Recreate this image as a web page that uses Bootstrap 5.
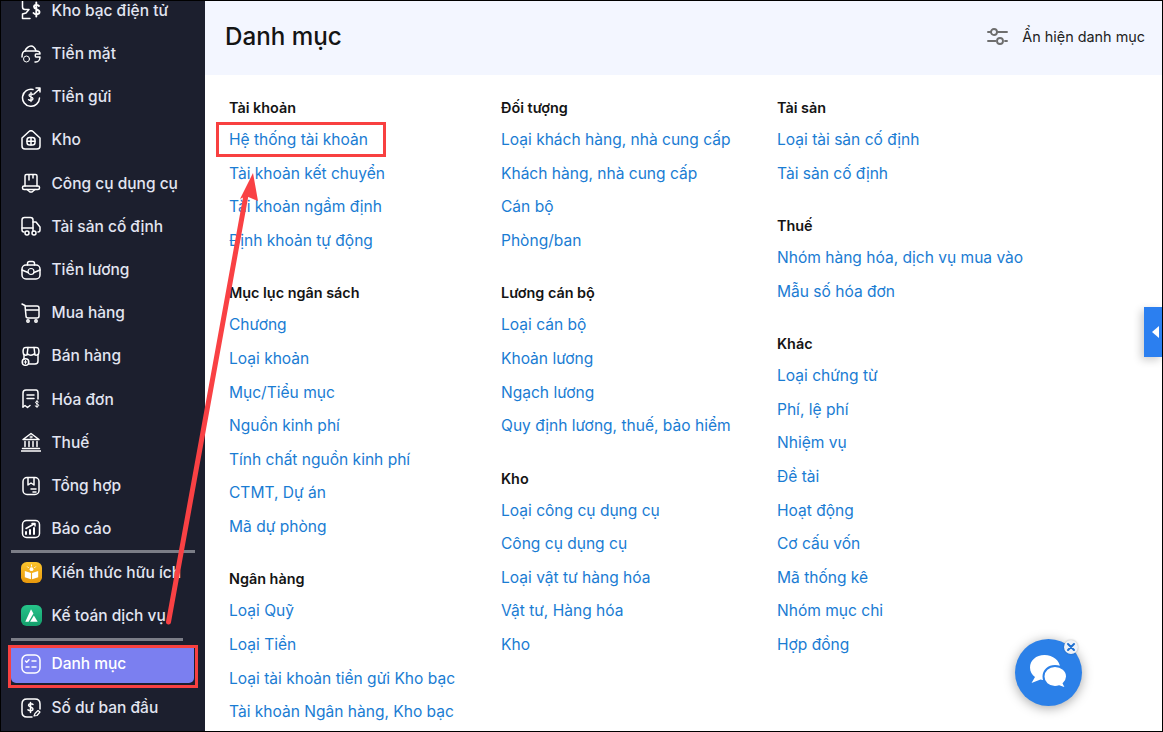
<!DOCTYPE html>
<html lang="vi">
<head>
<meta charset="utf-8">
<title>Danh mục</title>
<link href="https://cdn.jsdelivr.net/npm/bootstrap@5.3.0/dist/css/bootstrap.min.css" rel="stylesheet">
<style>
html,body{height:732px;overflow:hidden;margin:0}
body{font-family:Inter,"Liberation Sans",sans-serif;background:#fff;color:#141414}
.app-shell{height:732px;width:1163px;position:relative;overflow:hidden}
.side-pane{width:205px;background:#1c1f2e;flex:none;overflow:hidden;padding-top:0}
.side-list{margin-top:-11.1px}
.side-row{height:43.2px;padding-left:21px;gap:10.5px;color:#e2e5f1;font-size:15.5px;font-weight:500;white-space:nowrap;text-decoration:none;overflow:hidden}
.side-row svg{width:20px;height:20px;flex:none;fill:none;stroke:#fff;stroke-width:1.5;stroke-linecap:round;stroke-linejoin:round}
.side-row svg.app-badge{width:21px;height:21px;stroke:none;margin-right:-1px}
.side-rule{height:3px;background:#7b7d87;margin:-.5px 10px -2px 11px}
.side-rule.short-rule{margin:.3px 22px 7.6px 11px}
.side-active{background:#7b7ff0;color:#fff;height:35px;margin:0 11px 3.2px 11px;padding-left:10px;padding-bottom:3px;border-radius:0 0 5px 5px}
.main-pane{min-width:0}
.page-head{height:75px;background:#f3f6ff;padding:0 18px 0 20px}
.page-title{font-size:24.2px;font-weight:500;margin:0 0 1px;color:#141414;line-height:1}
.toggle-cats{gap:14px;font-size:14.4px;color:#222;margin-bottom:2px}
.toggle-cats svg{width:21px;height:20px;fill:none;stroke:#6e6e6e;stroke-width:1.9;stroke-linecap:round}
.cat-area{padding:16.3px 0 0 24px}
.cat-col-a{width:272px;flex:none}
.cat-col-b{width:276px;flex:none}
.cat-col-c{flex:1}
.cat-group{margin-bottom:18.8px}
.cat-head{font-size:14.4px;font-weight:600;color:#141414;height:32px;line-height:33.6px;margin:0}
.cat-link{display:block;font-size:15.55px;color:#1a7cd3;height:33.6px;line-height:33.6px;text-decoration:none;white-space:nowrap}
.mark-box{position:absolute;border:3px solid #f84040;pointer-events:none}
.mark-side{left:8px;top:645px;width:190px;height:43px}
.mark-link{left:216px;top:122px;width:170px;height:35px}
.arrow-layer{position:absolute;left:0;top:0;width:1163px;height:732px;pointer-events:none}
.side-tab{position:absolute;left:1144px;top:307px;width:19px;height:50px;background:#2b7ff0;box-shadow:-3px 3px 8px rgba(0,0,0,.2)}
.side-tab i{display:block;width:0;height:0;border-style:solid;border-width:6px 7px 6px 0;border-color:transparent #fff transparent transparent;margin:19px 0 0 8px}
.chat-bubble{position:absolute;left:1015px;top:639px;width:67px;height:67px;border-radius:50%;background:#2b80e8;box-shadow:0 2px 12px rgba(0,0,0,.35)}
.chat-bubble svg{width:67px;height:67px;display:block}
.chat-close{position:absolute;left:1064px;top:640px;width:14px;height:14px;border-radius:50%;background:#eef2f8;box-shadow:0 0 2px rgba(0,0,0,.3)}
.chat-close svg{display:block;width:14px;height:14px}
.frame-edge{position:absolute;inset:0;border:1px solid #000;pointer-events:none}
</style>
</head>
<body>
<div class="app-shell d-flex">
  <aside class="side-pane">
    <div class="side-list">
      <a class="side-row d-flex align-items-center" href="#"><svg viewBox="0 0 20 20"><path d="M1.500 0v6c0 1.500 1 2.500 2.500 2.500h4L5 12l-3.500 1v4.500H9"/><path d="M18 5c-.8-1.500-5-1.800-5 .8 0 3 5.500 2 5.500 5.200 0 2.800-4.500 2.800-6 1M15.300 1.500v14" stroke-width="1.900"/></svg>Kho bạc điện tử</a>
      <a class="side-row d-flex align-items-center" href="#"><svg viewBox="0 0 20 20"><path d="M1 13c0-4 1.500-6 3.500-6h11c2 0 3.500 1 3.500 3h-4c-1 0-1 3 0 3h4c0 3-2 5-4 5H14"/><path d="M4 7c1-3 4-5 6-5s4 2 5 5"/><circle cx="5.500" cy="15" r="3" stroke-width="1"/></svg>Tiền mặt</a>
      <a class="side-row d-flex align-items-center" href="#"><svg viewBox="0 0 20 20"><path d="M12 2.500A8.500 8.500 0 1 0 18.500 11"/><path d="M13 7l6-5.500M15 1h4v4"/><path d="M12 7.500c-1-1-4-1-4 .8s4 1.500 4 3.500-3 1.800-4.500.8M10 5.500v9" stroke-width="1.300"/></svg>Tiền gửi</a>
      <a class="side-row d-flex align-items-center" href="#"><svg viewBox="0 0 20 20"><path d="M1 8l7-6.500c1-.8 3-.8 4 0L19 8v8c0 2-1 3-3 3H4c-2 0-3-1-3-3z"/><rect x="6" y="7.500" width="8" height="7.500" rx="2.500"/><path d="M10 7.500V15M6 11.200h8"/></svg>Kho</a>
      <a class="side-row d-flex align-items-center" href="#"><svg viewBox="0 0 20 20"><path d="M4 13V3c0-1 .5-1.500 1.500-1.500h9c1 0 1.500.5 1.500 1.500v10"/><path d="M8 2v5M12 2v3"/><rect x="1.500" y="13" width="17" height="3.500" rx="1.500"/><path d="M6 16.500l3 2.500h2l3-2.500"/></svg>Công cụ dụng cụ</a>
      <a class="side-row d-flex align-items-center" href="#"><svg viewBox="0 0 20 20"><path d="M3 16c-1.500 0-2-1-2-2V4c0-1.500 1-2.500 2.500-2.500h6c1.500 0 2.500 1 2.500 2.500v11"/><path d="M1 12h11M12 6h3l4 5v3c0 1-1 2-2 2"/><circle cx="6" cy="17" r="2"/><circle cx="13" cy="17" r="2"/></svg>Tài sản cố định</a>
      <a class="side-row d-flex align-items-center" href="#"><svg viewBox="0 0 20 20"><rect x="1" y="5" width="18" height="14" rx="4"/><path d="M6.500 5V3.500c0-1 1-2 2-2h3c1 0 2 1 2 2V5M1 10l6 2.500M19 10l-6 2.500"/><circle cx="10" cy="11.500" r="3" stroke-width="1.200"/></svg>Tiền lương</a>
      <a class="side-row d-flex align-items-center" href="#"><svg viewBox="0 0 20 20"><path d="M1 1l3 1.500L5 13c0 1 1 2 2 2h9c1 0 2-1 2-2V5c0-1-1-2-2-2H4M5 7h13"/><circle cx="7" cy="18" r="1.200"/><circle cx="15" cy="18" r="1.200"/></svg>Mua hàng</a>
      <a class="side-row d-flex align-items-center" href="#"><svg viewBox="0 0 20 20"><path d="M3 13V9C1.500 7 2 3 3 2c.5-.5 1-.5 2-.5h10c1 0 1.500 0 2 .5 1 1 1.500 5 0 7v6c0 2-1 3-3 3H8"/><path d="M7 1.500 6 9M13 1.500 14 9M2.500 8c1 1.500 3.500 1.500 4.500 0 .8 1.500 5 1.500 6 0 1 1.500 3 1.500 4.500 0"/><circle cx="4.500" cy="16" r="3.300"/><path d="M4.500 14.500v3M3 16h3" stroke-width="1"/></svg>Bán hàng</a>
      <a class="side-row d-flex align-items-center" href="#"><svg viewBox="0 0 20 20"><path d="M2 18V4c0-2 1-3 3-3h10c1.500 0 2 1 2 3v6"/><path d="M2 18l2-1.500 2.500 2 2.500-2"/><path d="M6 6h7M6 9.500h7" /><path d="M17.500 13c-.5-.8-3-1-3 .5s3.200 1.200 3.200 2.800-2.500 1.500-3.500.7M16 11.500v7" stroke-width="1"/></svg>Hóa đơn</a>
      <a class="side-row d-flex align-items-center" href="#"><svg viewBox="0 0 20 20"><path d="M0 19h20M1.500 16.500h17M2 7.500 10 1.500l8 6zM4 9.500v5M8 9.500v5M12 9.500v5M16 9.500v5"/><circle cx="10" cy="5" r="1" stroke-width="1"/></svg>Thuế</a>
      <a class="side-row d-flex align-items-center" href="#"><svg viewBox="0 0 20 20"><rect x="2" y="1.500" width="16" height="17" rx="4"/><path d="M7 2v7l3-2 3 2V2M10 13h5M12 16h3"/></svg>Tổng hợp</a>
      <a class="side-row d-flex align-items-center" href="#"><svg viewBox="0 0 20 20"><rect x="1.500" y="1.500" width="17" height="17" rx="4"/><path d="M5 15v-2M9 15v-4M13 15V9" stroke-width="2"/><path d="M5 9.500 13 5M11 4.500l3 0 0 2.500"/></svg>Báo cáo</a>
      <div class="side-rule"></div>
      <a class="side-row d-flex align-items-center" href="#"><svg class="app-badge" viewBox="0 0 22 22"><defs><linearGradient id="gradA" x1="0" y1="0" x2="0" y2="1"><stop offset="0" stop-color="#fcc52d"/><stop offset="1" stop-color="#e8980c"/></linearGradient></defs><rect width="22" height="22" rx="6" fill="url(#gradA)"/><path d="M4 9.500l6.400 2V18L4 16zM18 9.500l-6.400 2V18L18 16z" fill="#fff"/><circle cx="11" cy="7.500" r="2" fill="#fff"/><path d="M11 3v1.300M6.800 5l1 1M15.200 5l-1 1" stroke="#fff" stroke-width="1"/></svg>Kiến thức hữu ích</a>
      <a class="side-row d-flex align-items-center" href="#"><svg class="app-badge" viewBox="0 0 22 22"><defs><linearGradient id="gradB" x1="0" y1="0" x2="0" y2="1"><stop offset="0" stop-color="#26c48a"/><stop offset="1" stop-color="#149e6c"/></linearGradient></defs><rect width="22" height="22" rx="6" fill="url(#gradB)"/><path d="M10.500 4.500 13 9l-5 8.500H4.500z" fill="#fff"/><path d="M13.500 11l4 6.500H9.500z" fill="#fff"/></svg>Kế toán dịch vụ</a>
      <div class="side-rule short-rule"></div>
      <a class="side-row side-active d-flex align-items-center" href="#"><svg viewBox="0 0 20 20"><rect x="1" y="1" width="18" height="18" rx="5"/><path d="M4.500 7l1.200 1.200L8 5.800M11 7h4M5 13h3M11 13h4"/></svg>Danh mục</a>
      <a class="side-row d-flex align-items-center" href="#"><svg viewBox="0 0 20 20"><path d="M11 19H6c-3 0-5-2-5-5V6c0-3 2-5 5-5h8c3 0 5 2 5 5v5"/><path d="M12 6.500c-1-1.200-4.500-1.200-4.500.8s4.500 1.500 4.500 3.700-3.500 2-5 .8M9.500 4.500v10"/><path d="M13 18l1-2.500 3-3 2 1.500-3 3.500z" stroke-width="1.200"/></svg>Số dư ban đầu</a>
    </div>
  </aside>
  <main class="main-pane flex-grow-1">
    <header class="page-head d-flex align-items-center justify-content-between">
      <h1 class="page-title">Danh mục</h1>
      <div class="toggle-cats d-flex align-items-center">
        <svg viewBox="0 0 21 20"><circle cx="7" cy="6" r="3"/><path d="M1 6h2.500M10.500 6H20M1 15h7.500M18 15h2"/><circle cx="13" cy="15" r="3"/></svg>
        <span>Ẩn hiện danh mục</span>
      </div>
    </header>
    <section class="cat-area d-flex">
      <div class="cat-col-a">
        <div class="cat-group"><p class="cat-head">Tài khoản</p>
          <a class="cat-link" href="#">Hệ thống tài khoản</a><a class="cat-link" href="#">Tài khoản kết chuyển</a><a class="cat-link" href="#">Tài khoản ngầm định</a><a class="cat-link" href="#">Định khoản tự động</a></div>
        <div class="cat-group"><p class="cat-head">Mục lục ngân sách</p>
          <a class="cat-link" href="#">Chương</a><a class="cat-link" href="#">Loại khoản</a><a class="cat-link" href="#">Mục/Tiểu mục</a><a class="cat-link" href="#">Nguồn kinh phí</a><a class="cat-link" href="#">Tính chất nguồn kinh phí</a><a class="cat-link" href="#">CTMT, Dự án</a><a class="cat-link" href="#">Mã dự phòng</a></div>
        <div class="cat-group"><p class="cat-head">Ngân hàng</p>
          <a class="cat-link" href="#">Loại Quỹ</a><a class="cat-link" href="#">Loại Tiền</a><a class="cat-link" href="#">Loại tài khoản tiền gửi Kho bạc</a><a class="cat-link" href="#">Tài khoản Ngân hàng, Kho bạc</a></div>
      </div>
      <div class="cat-col-b">
        <div class="cat-group"><p class="cat-head">Đối tượng</p>
          <a class="cat-link" href="#">Loại khách hàng, nhà cung cấp</a><a class="cat-link" href="#">Khách hàng, nhà cung cấp</a><a class="cat-link" href="#">Cán bộ</a><a class="cat-link" href="#">Phòng/ban</a></div>
        <div class="cat-group"><p class="cat-head">Lương cán bộ</p>
          <a class="cat-link" href="#">Loại cán bộ</a><a class="cat-link" href="#">Khoản lương</a><a class="cat-link" href="#">Ngạch lương</a><a class="cat-link" href="#">Quy định lương, thuế, bảo hiểm</a></div>
        <div class="cat-group"><p class="cat-head">Kho</p>
          <a class="cat-link" href="#">Loại công cụ dụng cụ</a><a class="cat-link" href="#">Công cụ dụng cụ</a><a class="cat-link" href="#">Loại vật tư hàng hóa</a><a class="cat-link" href="#">Vật tư, Hàng hóa</a><a class="cat-link" href="#">Kho</a></div>
      </div>
      <div class="cat-col-c">
        <div class="cat-group"><p class="cat-head">Tài sản</p>
          <a class="cat-link" href="#">Loại tài sản cố định</a><a class="cat-link" href="#">Tài sản cố định</a></div>
        <div class="cat-group"><p class="cat-head">Thuế</p>
          <a class="cat-link" href="#">Nhóm hàng hóa, dịch vụ mua vào</a><a class="cat-link" href="#">Mẫu số hóa đơn</a></div>
        <div class="cat-group"><p class="cat-head">Khác</p>
          <a class="cat-link" href="#">Loại chứng từ</a><a class="cat-link" href="#">Phí, lệ phí</a><a class="cat-link" href="#">Nhiệm vụ</a><a class="cat-link" href="#">Đề tài</a><a class="cat-link" href="#">Hoạt động</a><a class="cat-link" href="#">Cơ cấu vốn</a><a class="cat-link" href="#">Mã thống kê</a><a class="cat-link" href="#">Nhóm mục chi</a><a class="cat-link" href="#">Hợp đồng</a></div>
      </div>
    </section>
  </main>
  <div class="side-tab"><i></i></div>
  <div class="chat-bubble"><svg viewBox="0 0 67 67"><path d="M29.500 16C21 16 15 21.500 15 28.500c0 4 2 7.500 5 9.500l-3.500 6 9-3.500c1.500.4 3 .6 4.500.6 8.500 0 15-5.500 15-12.500S38 16 29.500 16z" fill="#fff"/><path d="M40 27c-6.500 0-11.500 4.500-11.500 10.500S33.500 48 40 48c1.500 0 3-.3 4.300-.8l7.200 2.800-2.800-5.500c2-2 3.300-4.500 3.300-7C52 31.500 46.500 27 40 27z" fill="#fff" stroke="#2b80e8" stroke-width="2"/></svg></div>
  <div class="chat-close"><svg viewBox="0 0 14 14"><path d="M4 4l6 6M10 4l-6 6" stroke="#1f6fd0" stroke-width="2" stroke-linecap="round"/></svg></div>
  <div class="mark-box mark-side"></div>
  <div class="mark-box mark-link"></div>
  <svg class="arrow-layer" viewBox="0 0 1163 732"><path d="M168.500 622 246 195" stroke="#f94144" stroke-width="5" stroke-linecap="round" fill="none"/><path d="M253 173 258 201 246 196 240 199z" fill="#f94144"/></svg>
  <div class="frame-edge"></div>
</div>
<script src="https://cdn.jsdelivr.net/npm/bootstrap@5.3.0/dist/js/bootstrap.bundle.min.js"></script>
</body>
</html>
